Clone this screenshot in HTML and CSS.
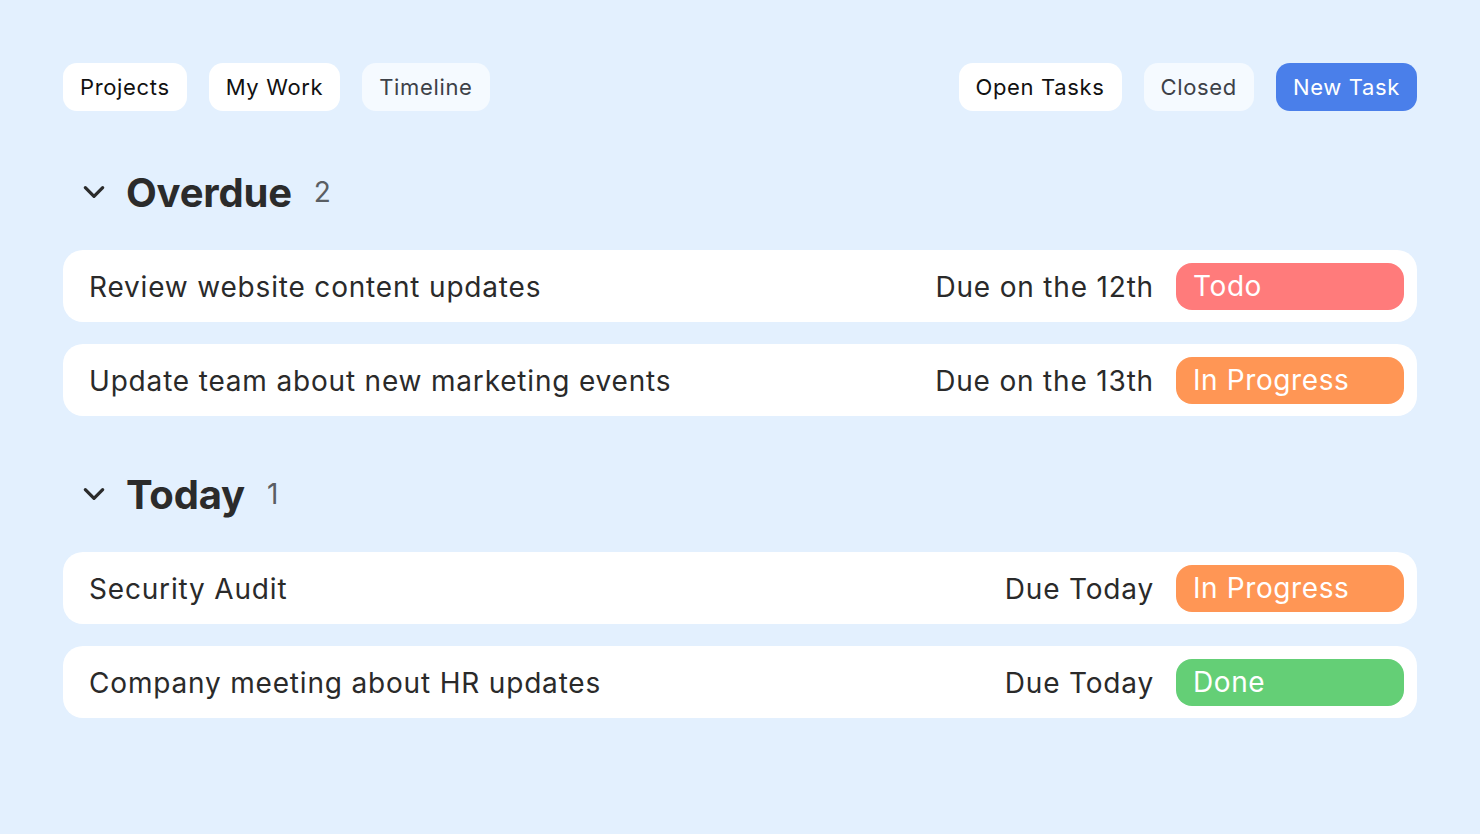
FILE: index.html
```html
<!DOCTYPE html>
<html>
<head>
<meta charset="utf-8">
<link rel="stylesheet" href="styles.css">
</head>
<body>
<div class="page">
  <header class="toolbar">
    <nav class="group">
      <button class="btn">Projects</button>
      <button class="btn">My Work</button>
      <button class="btn muted">Timeline</button>
    </nav>
    <nav class="group">
      <button class="btn">Open Tasks</button>
      <button class="btn muted">Closed</button>
      <button class="btn primary">New Task</button>
    </nav>
  </header>

  <section class="section">
    <h2 class="heading">
      <svg class="chev" viewBox="0 0 24 24" width="24" height="24"><path d="M4 8l8 8 8-8" fill="none" stroke="#2b2b2b" stroke-width="3" stroke-linecap="round" stroke-linejoin="round"/></svg>
      <span class="title">Overdue</span>
      <span class="count">2</span>
    </h2>
    <div class="rows">
      <div class="row"><span class="name">Review website content updates</span><span class="due">Due on the 12th</span><span class="pill todo">Todo</span></div>
      <div class="row"><span class="name">Update team about new marketing events</span><span class="due">Due on the 13th</span><span class="pill progress">In Progress</span></div>
    </div>
  </section>

  <section class="section">
    <h2 class="heading">
      <svg class="chev" viewBox="0 0 24 24" width="24" height="24"><path d="M4 8l8 8 8-8" fill="none" stroke="#2b2b2b" stroke-width="3" stroke-linecap="round" stroke-linejoin="round"/></svg>
      <span class="title">Today</span>
      <span class="count">1</span>
    </h2>
    <div class="rows">
      <div class="row"><span class="name">Security Audit</span><span class="due">Due Today</span><span class="pill progress">In Progress</span></div>
      <div class="row"><span class="name">Company meeting about HR updates</span><span class="due">Due Today</span><span class="pill done">Done</span></div>
    </div>
  </section>
</div>
</body>
</html>
```

FILE: styles.css
```css
* { box-sizing: border-box; }
html, body { margin: 0; padding: 0; }
body {
  background: #e3f0fe;
  font-family: Inter, "Noto Sans", sans-serif;
  color: #2a2a2a;
  width: 1480px;
  height: 834px;
  overflow: hidden;
}
.page { padding: 63px 63px 0 63px; }
.toolbar { display: flex; justify-content: space-between; }
.group { display: flex; gap: 22px; }
.btn {
  font-family: inherit;
  font-size: 22px;
  letter-spacing: 0.65px;
  height: 48px;
  padding: 0 17px;
  border: none;
  border-radius: 14px;
  background: #ffffff;
  color: #111111;
  line-height: 48px;
}
.btn.muted { background: #f5faff; color: #3d4148; }
.btn.primary { background: #4a7fea; color: #ffffff; }

.section { margin-top: 57px; }
.section + .section { margin-top: 54px; }
.heading {
  margin: 0 0 34px 0;
  height: 48px;
  display: flex;
  align-items: center;
  padding-left: 18px;
}
.chev { width: 26px; height: 26px; margin-right: 19px; }
.title { font-size: 40px; font-weight: 700; color: #2b2b2b; letter-spacing: -0.2px; }
.count { font-size: 28px; font-weight: 400; color: #5a5e63; margin-left: 22px; }

.rows { display: flex; flex-direction: column; gap: 22px; }
.row {
  height: 72px;
  background: #ffffff;
  border-radius: 20px;
  display: flex;
  align-items: center;
  padding: 2px 13px 0 26px;
  font-size: 28px;
  letter-spacing: 0.82px;
}
.name { flex: 1; color: #2a2a2a; }
.due { color: #2a2a2a; margin-right: 22px; }
.pill {
  width: 228px;
  height: 47px;
  margin-top: -2px;
  border-radius: 16px;
  color: #ffffff;
  padding-left: 17px;
  line-height: 47px;
  letter-spacing: 0.6px;
}
.pill.todo { background: #ff7b7b; }
.pill.progress { background: #ff9655; }
.pill.done { background: #64cf76; }
```
